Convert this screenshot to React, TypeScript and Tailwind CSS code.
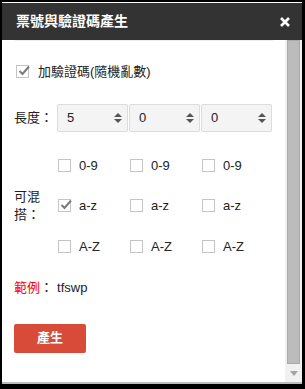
import React from 'react';

const font = { fontFamily: '"Liberation Sans", "Noto Sans CJK TC", sans-serif' };

function Box({ checked }: { checked?: boolean }) {
  return (
    <span className="relative inline-block w-[13px] h-[13px] border border-[#c4c4c4] bg-white shrink-0">
      {checked && (
        <svg className="absolute left-[1px] top-[-2px]" width="13" height="13" viewBox="0 0 13 13">
          <path d="M1.5 7 L4.5 10 L11 2.5" fill="none" stroke="#7a7a7a" strokeWidth="2" />
        </svg>
      )}
    </span>
  );
}

function Check({ label, checked }: { label: string; checked?: boolean }) {
  return (
    <div className="flex items-center gap-[8px] w-[72px]">
      <Box checked={checked} />
      <span className="text-[13px] text-[#222]">{label}</span>
    </div>
  );
}

function Select({ value }: { value: string }) {
  return (
    <div className="flex items-center justify-between w-[71px] h-[28px] border border-[#dcdcdc] rounded-[2px] bg-[#f4f4f4] pl-[9px] pr-[5px]">
      <span className="text-[13px] text-[#222]">{value}</span>
      <svg width="8" height="12" viewBox="0 0 8 12">
        <path d="M0 5 L4 1 L8 5 Z" fill="#555" />
        <path d="M0 7 L4 11 L8 7 Z" fill="#555" />
      </svg>
    </div>
  );
}

export default function App() {
  const cols = [0, 1, 2];
  return (
    <div className="w-[305px] h-[389px] bg-black pl-[2px] pr-[3px] pt-[2px] pb-[5px]" style={font}>
      <div className="flex flex-col h-full bg-white border-t border-white">
        {/* Header */}
        <div className="h-[37px] bg-[#333] flex items-center justify-between pl-[14px] pr-[12px] shrink-0">
          <span className="text-[14px] font-bold text-white">票號與驗證碼產生</span>
          <svg width="10" height="10" viewBox="0 0 10 10">
            <path d="M1 1 L9 9 M9 1 L1 9" stroke="#fff" strokeWidth="2.6" />
          </svg>
        </div>

        <div className="flex flex-1 min-h-0 border-b-2 border-[#bdbdbd]">
          {/* Content */}
          <div className="flex-1 pl-[12px] pr-[11px]">
            <div className="border-t border-[#eee] mx-[1px]" />
            <div className="flex items-center gap-[9px] mt-[21px] pl-[2px]">
              <Box checked />
              <span className="text-[13px] text-[#222]">加驗證碼(隨機亂數)</span>
            </div>

            <div className="flex items-center mt-[22px]">
              <span className="text-[13px] text-[#222] w-[43px]">長度：</span>
              <div className="flex gap-[1px]">
                <Select value="5" />
                <Select value="0" />
                <Select value="0" />
              </div>
            </div>

            <div className="flex items-center mt-[24px]">
              <div className="w-[43px] text-[13px] leading-[18px] text-[#222] pr-[2px]">可混搭：</div>
              <div className="flex flex-col gap-[21px] pl-[1px]">
                <div className="flex">{cols.map((c) => <Check key={c} label="0-9" />)}</div>
                <div className="flex">{cols.map((c) => <Check key={c} label="a-z" checked={c === 0} />)}</div>
                <div className="flex">{cols.map((c) => <Check key={c} label="A-Z" />)}</div>
              </div>
            </div>

            <div className="flex items-center mt-[22px] text-[13px]">
              <span className="text-[#f00]">範例</span>
              <span className="text-[#222] w-[17px]">：</span>
              <span className="text-[#222]">tfswp</span>
            </div>

            <button className="mt-[26px] w-[72px] h-[29px] rounded-[2px] bg-[#d94b39] text-white text-[13px] font-bold">
              產生
            </button>
          </div>

          {/* Scrollbar */}
          <div className="w-[17px] bg-[#f1f1f1] flex flex-col items-center shrink-0">
            <div className="w-[13px] flex-1 bg-[#bcbcbc] border border-[#aaa]" />
            <div className="h-[18px] flex items-center justify-center">
              <svg width="8" height="5" viewBox="0 0 8 5">
                <path d="M0 0 L8 0 L4 5 Z" fill="#a3a3a3" />
              </svg>
            </div>
          </div>
        </div>
      </div>
    </div>
  );
}
